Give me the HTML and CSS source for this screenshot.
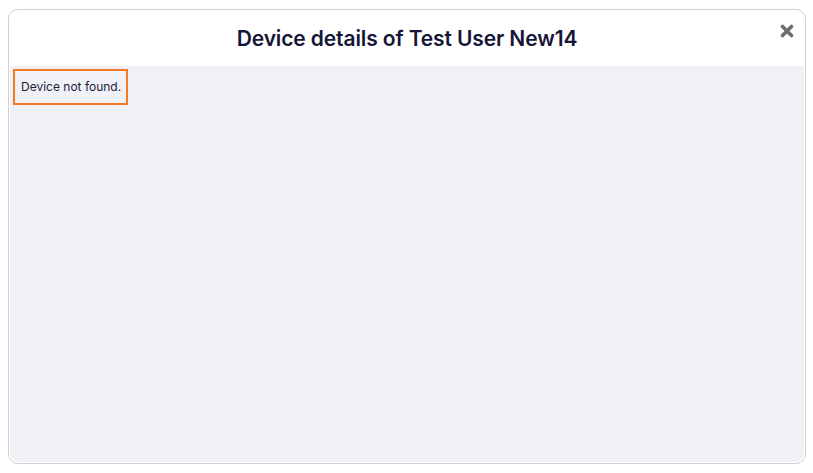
FILE: index.html
```html
<!DOCTYPE html>
<html>
<head>
<meta charset="utf-8">
<link rel="stylesheet" href="styles.css">
</head>
<body>
<div class="modal">
  <div class="modal-header">
    <h1 class="modal-title">Device details of Test User New14</h1>
    <button class="close" aria-label="Close">
      <svg width="14" height="14" viewBox="0 0 14 14"><path d="M2.5 2.5 L11.5 11.5 M11.5 2.5 L2.5 11.5" stroke="#6f6f6f" stroke-width="3.6" stroke-linecap="round"/></svg>
    </button>
  </div>
  <div class="modal-body">
    <div class="notice">Device not found.</div>
  </div>
</div>
</body>
</html>
```
FILE: styles.css
```css
html, body {
  margin: 0;
  padding: 0;
  background: #ffffff;
}
body {
  padding: 9px 7px 9px 8px;
  box-sizing: border-box;
  height: 473px;
  font-family: Inter, "Noto Sans", sans-serif;
}
.modal {
  height: 455px;
  box-sizing: border-box;
  border: 1px solid #cfcfd4;
  border-radius: 10px;
  background: #ffffff;
  display: flex;
  flex-direction: column;
  overflow: hidden;
}
.modal-header {
  height: 56px;
  flex: none;
  display: flex;
  align-items: center;
  justify-content: center;
  position: relative;
}
.modal-title {
  margin: 0;
  font-size: 21px;
  font-weight: 600;
  color: #161637;
  letter-spacing: -0.12px;
  padding-top: 1px;
}
.close {
  position: absolute;
  right: 11px;
  top: 14px;
  border: 0;
  background: transparent;
  padding: 0;
  width: 14px;
  height: 14px;
  display: flex;
}
.modal-body {
  flex: 1;
  background: #f0f1f6;
  margin: 0 1px 1px 1px;
  border-radius: 0 0 9px 9px;
  padding: 3px 3px;
}
.notice {
  display: inline-block;
  border: 2px solid #f57a25;
  padding: 8px 5px 9px 6px;
  font-size: 12px;
  line-height: 15px;
  color: #1c1c3c;
}
```
